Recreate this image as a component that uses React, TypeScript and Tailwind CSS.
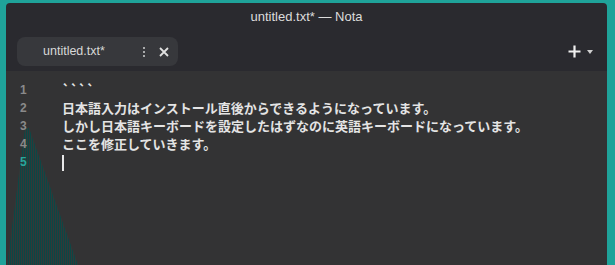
import React from 'react';

const lines = [
  '````',
  '日本語入力はインストール直後からできるようになっています。',
  'しかし日本語キーボードを設定したはずなのに英語キーボードになっています。',
  'ここを修正していきます。',
  '',
];

const App: React.FC = () => {
  return (
    <div className="w-[615px] h-[265px] overflow-hidden bg-[#1fa39a] pl-[6px] pr-[8px] pt-[3px] relative">
      <div className="h-[300px] bg-[#2a2a2f] rounded-t-[4px] flex flex-col font-['Liberation_Sans',sans-serif]">
        {/* title */}
        <div className="h-[28px] flex items-center justify-center text-[13px] text-[#dcdcdc]">
          untitled.txt* — Nota
        </div>
        {/* tabs */}
        <div className="h-[40px] flex items-start justify-between pl-[11px] pr-[14px] pt-[6px]">
          <div className="w-[161px] h-[29px] rounded-[8px] bg-[#37383c] flex items-center text-[12.5px] text-[#d8d8d8]">
            <span className="ml-[26px] w-[99px]">untitled.txt*</span>
            <span className="flex flex-col gap-[2px] items-center w-[4px]">
              <span className="w-[2px] h-[2px] bg-[#d0d0d0] rounded-full" />
              <span className="w-[2px] h-[2px] bg-[#d0d0d0] rounded-full" />
              <span className="w-[2px] h-[2px] bg-[#d0d0d0] rounded-full" />
            </span>
            <svg className="ml-[13px]" width="10" height="10" viewBox="0 0 10 10">
              <path d="M1 1 L9 9 M9 1 L1 9" stroke="#e0e0e0" strokeWidth="1.8" />
            </svg>
          </div>
          <div className="flex items-center gap-[6px] mt-[8px]">
            <svg width="13" height="13" viewBox="0 0 13 13">
              <path d="M6.5 0.5 V12.5 M0.5 6.5 H12.5" stroke="#f0f0f0" strokeWidth="2.2" />
            </svg>
            <svg width="6" height="4" viewBox="0 0 6 4">
              <path d="M0 0 H6 L3 4 Z" fill="#d0d0d0" />
            </svg>
          </div>
        </div>
        {/* editor */}
        <div className="flex-1 bg-[#333334] flex pt-[10px]">
          <div className="relative z-10 w-[56px] pl-[14px] flex flex-col">
            {lines.map((_, i) => (
              <div
                key={i}
                className={`h-[18px] leading-[18px] text-[12px] font-bold ${i === 4 ? 'text-[#2aa69c]' : 'text-[#8a8a8a]'}`}
              >
                {i + 1}
              </div>
            ))}
          </div>
          <div className="flex flex-col font-['Noto_Sans_CJK_JP',sans-serif] text-[13px] font-bold text-[#e4e4e4]">
            {lines.map((l, i) => (
              <div key={i} className="h-[18px] leading-[18px] whitespace-nowrap">
                {i === 4 ? <span className="inline-block w-[1.5px] h-[16px] bg-[#e8e8e8] align-middle" /> : l}
              </div>
            ))}
          </div>
        </div>
      </div>
      <svg className="absolute left-0 top-0 pointer-events-none" width="615" height="265">
        <defs>
          <pattern id="dith" width="2" height="2" patternUnits="userSpaceOnUse">
            <rect width="2" height="2" fill="#333838" />
            <rect width="1" height="2" fill="#0c4745" />
          </pattern>
        </defs>
        <polygon points="25,128 29,128 78,265 7,265" fill="url(#dith)" />
      </svg>
    </div>
  );
};

export default App;
